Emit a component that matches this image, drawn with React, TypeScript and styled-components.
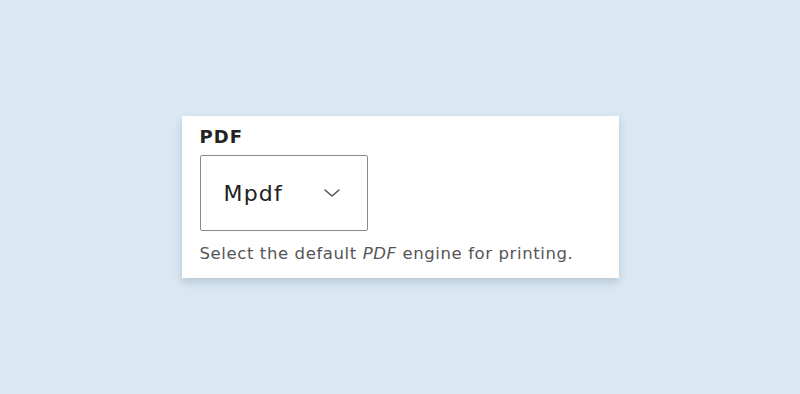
import styled, { createGlobalStyle } from "styled-components";

const GlobalStyle = createGlobalStyle`
  html, body {
    margin: 0;
    padding: 0;
    background: #d9e8f3;
  }
  body {
    font-family: "DejaVu Sans", "Noto Sans", sans-serif;
  }
`;

const Page = styled.div`
  width: 800px;
  height: 394px;
  display: flex;
  align-items: center;
  justify-content: center;
  box-sizing: border-box;
`;

const Card = styled.div`
  width: 437px;
  box-sizing: border-box;
  background: #fff;
  padding: 8px 18px 13px;
  box-shadow: 0 4px 8px rgba(60, 80, 100, 0.22);
  display: flex;
  flex-direction: column;
`;

const Label = styled.label`
  font-size: 18px;
  font-weight: 700;
  letter-spacing: 1px;
  color: #222;
  line-height: 26px;
  margin-bottom: 5px;
`;

const SelectBox = styled.div`
  width: 168px;
  height: 76px;
  box-sizing: border-box;
  border: 1px solid #8a8a8a;
  border-radius: 2px;
  display: flex;
  align-items: center;
  justify-content: space-between;
  padding: 0 25px 0 23px;
  font-size: 22px;
  letter-spacing: 1.2px;
  color: #222;
`;

const Chevron = styled.svg`
  width: 20px;
  height: 20px;
  color: #555;
`;

const Help = styled.p`
  margin: 12px 0 0;
  font-size: 16.5px;
  letter-spacing: 0.6px;
  line-height: 22px;
  color: #555;

  em {
    font-style: italic;
  }
`;

export default function App() {
  return (
    <>
      <GlobalStyle />
      <Page>
        <Card>
          <Label>PDF</Label>
          <SelectBox>
            <span>Mpdf</span>
            <Chevron viewBox="0 0 20 20" fill="none">
              <path
                d="M3 7l7 6 7-6"
                stroke="currentColor"
                strokeWidth="1.6"
                strokeLinecap="round"
                strokeLinejoin="round"
              />
            </Chevron>
          </SelectBox>
          <Help>
            Select the default <em>PDF</em> engine for printing.
          </Help>
        </Card>
      </Page>
    </>
  );
}
